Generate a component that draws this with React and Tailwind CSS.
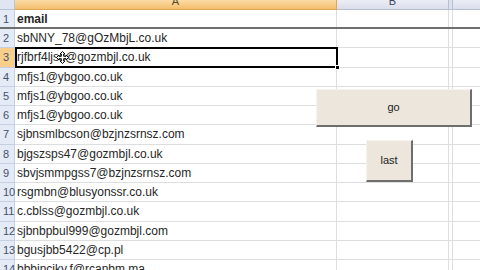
import React from "react";

const emails = [
  "sbNNY_78@gOzMbjL.co.uk",
  "rjfbrf4ljss@gozmbjl.co.uk",
  "mfjs1@ybgoo.co.uk",
  "mfjs1@ybgoo.co.uk",
  "mfjs1@ybgoo.co.uk",
  "sjbnsmlbcson@bzjnzsrnsz.com",
  "bjgszsps47@gozmbjl.co.uk",
  "sbvjsmmpgss7@bzjnzsrnsz.com",
  "rsgmbn@blusyonssr.co.uk",
  "c.cblss@gozmbjl.co.uk",
  "sjbnbpbul999@gozmbjl.com",
  "bgusjbb5422@cp.pl",
  "bbbjnciky.f@rcanbm.ma",
];

function Row({ n, text, selected }) {
  return (
    <div className="flex h-[19.25px] shrink-0">
      <div
        className={
          "w-[15px] shrink-0 border-b border-r border-[#c5d1e3] text-[11px] leading-[19px] pl-[3px] text-[#46506a] " +
          (selected ? "bg-[#f8cf8a]" : "bg-[#e4ebf6]")
        }
      >
        {n}
      </div>
      <div className="w-[322px] shrink-0 border-b border-r border-[#dcdee0] pl-[2px] text-[12px] leading-[19px] text-[#262626] whitespace-nowrap overflow-hidden">
        {text}
      </div>
      <div className="w-[112px] shrink-0 border-b border-r border-[#dcdee0]" />
      <div className="w-[4px] shrink-0 border-b border-r border-[#dcdee0]" />
      <div className="flex-1 border-b border-[#dcdee0]" />
    </div>
  );
}

function MoveCursor() {
  return (
    <svg width="13" height="13" viewBox="0 0 13 13">
      <path
        d="M6.5 0.5 L9 3 L7.7 3 L7.7 5.3 L10 5.3 L10 4 L12.5 6.5 L10 9 L10 7.7 L7.7 7.7 L7.7 10 L9 10 L6.5 12.5 L4 10 L5.3 10 L5.3 7.7 L3 7.7 L3 9 L0.5 6.5 L3 4 L3 5.3 L5.3 5.3 L5.3 3 L4 3 Z"
        fill="#ffffff"
        stroke="#000000"
        strokeWidth="1"
        strokeLinejoin="miter"
      />
    </svg>
  );
}

export default function App() {
  return (
    <div
      className="relative w-[480px] h-[270px] overflow-hidden bg-white"
      style={{ fontFamily: '"Liberation Sans", Arial, sans-serif' }}
    >
      {/* column headers */}
      <div className="flex h-[10px]">
        <div className="w-[15px] shrink-0 bg-[#dfe6f1] border-b border-r border-[#b8c3d6]" />
        <div className="w-[322px] shrink-0 bg-gradient-to-b from-[#fbdca6] to-[#f5be6c] border-b border-r border-[#d9a65a] text-center text-[11px] leading-[3px] text-[#5a4a2a]">
          A
        </div>
        <div className="w-[112px] shrink-0 bg-gradient-to-b from-[#eceef6] to-[#dadeeb] border-b border-r border-[#b8bfd2] text-center text-[11px] leading-[3px] text-[#3c4258]">
          B
        </div>
        <div className="w-[4px] shrink-0 bg-[#dde1ec] border-b border-r border-[#b8bfd2]" />
        <div className="flex-1 bg-gradient-to-b from-[#eceef6] to-[#dadeeb] border-b border-[#b8bfd2]" />
      </div>

      {/* row 1 with freeze line */}
      <div className="flex h-[19px] border-b-2 border-[#6f6f6f]">
        <div className="w-[15px] shrink-0 bg-[#e4ebf6] border-r border-[#c5d1e3] text-[11px] leading-[19px] pl-[3px] text-[#46506a]">
          1
        </div>
        <div className="w-[322px] shrink-0 border-r border-[#dcdee0] pl-[2px] text-[12px] font-bold leading-[19px] text-[#262626]">
          email
        </div>
        <div className="w-[112px] shrink-0 border-r border-[#dcdee0]" />
        <div className="w-[4px] shrink-0 border-r border-[#dcdee0]" />
        <div className="flex-1" />
      </div>

      {emails.map((e, i) => (
        <Row key={i} n={i + 2} text={e} selected={i === 1} />
      ))}

      {/* selection box on A3 */}
      <div className="absolute left-[15px] top-[47px] w-[323px] h-[21px] border-2 border-black" />
      <div className="absolute left-[335px] top-[65px] w-[5px] h-[5px] bg-black border border-white" />

      {/* cursor */}
      <div className="absolute left-[56px] top-[51px]">
        <MoveCursor />
      </div>

      {/* buttons */}
      <div className="absolute left-[316px] top-[89px] w-[156px] h-[38px] bg-[#ece6dc] border-t border-l border-[#f7f4ef] border-r-2 border-b-2 border-r-[#6e6e6e] border-b-[#6e6e6e] flex items-center justify-center text-[11px] text-[#222]">
        go
      </div>
      <div className="absolute left-[366px] top-[140px] w-[47px] h-[42px] bg-[#ece6dc] border-t border-l border-[#f7f4ef] border-r-2 border-b-2 border-r-[#6e6e6e] border-b-[#6e6e6e] flex items-center justify-center text-[11px] text-[#222]">
        last
      </div>
    </div>
  );
}
